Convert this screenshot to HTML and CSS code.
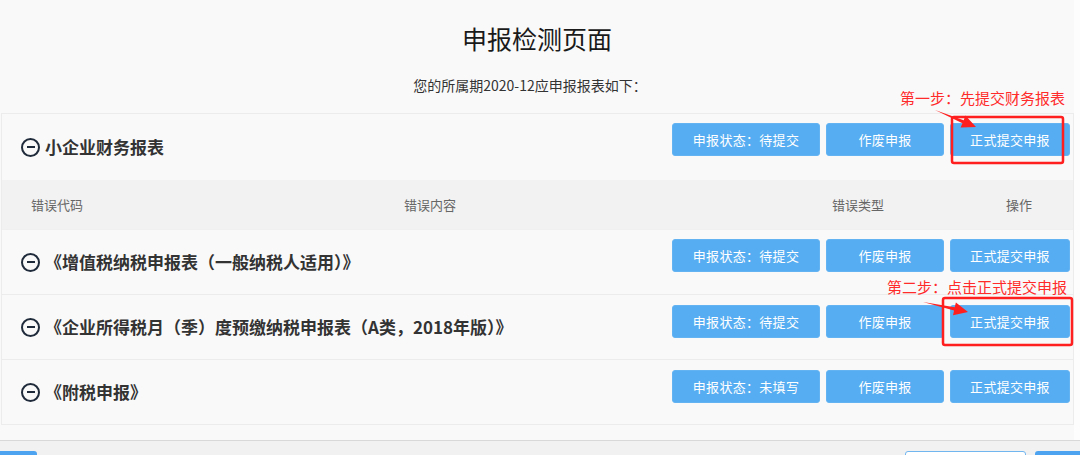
FILE: index.html
```html
<!DOCTYPE html>
<html lang="zh-CN">
<head>
<meta charset="utf-8">
<title>申报检测页面</title>
<link rel="stylesheet" href="styles.css">
</head>
<body>
<div class="page">
  <div class="main">
    <header class="head">
      <h1 class="title">申报检测页面</h1>
      <p class="sub">您的所属期2020-12应申报报表如下：</p>
    </header>
    <div class="panel">
      <div class="row first">
        <div class="name"><span class="ico"></span>小企业财务报表</div>
        <div class="ops">
          <button class="btn b1">申报状态：待提交</button>
          <button class="btn b2">作废申报</button>
          <button class="btn b3">正式提交申报</button>
        </div>
      </div>
      <div class="thead">
        <span>错误代码</span>
        <span>错误内容</span>
        <span>错误类型</span>
        <span>操作</span>
      </div>
      <div class="row">
        <div class="name"><span class="ico"></span>《增值税纳税申报表（一般纳税人适用）》</div>
        <div class="ops">
          <button class="btn b1">申报状态：待提交</button>
          <button class="btn b2">作废申报</button>
          <button class="btn b3">正式提交申报</button>
        </div>
      </div>
      <div class="row">
        <div class="name"><span class="ico"></span>《企业所得税月（季）度预缴纳税申报表（A类，2018年版）》</div>
        <div class="ops low">
          <button class="btn b1">申报状态：待提交</button>
          <button class="btn b2">作废申报</button>
          <button class="btn b3">正式提交申报</button>
        </div>
      </div>
      <div class="row">
        <div class="name"><span class="ico"></span>《附税申报》</div>
        <div class="ops low">
          <button class="btn b1">申报状态：未填写</button>
          <button class="btn b2">作废申报</button>
          <button class="btn b3">正式提交申报</button>
        </div>
      </div>
    </div>
  </div>
  <footer class="foot">
    <span class="fbtn fleft"></span>
    <span class="fspace"></span>
    <span class="fbtn fline"></span>
    <span class="fbtn fblue"></span>
  </footer>

  <span class="note note1">第一步：先提交财务报表</span>
  <span class="note note2">第二步：点击正式提交申报</span>
  <svg class="marks" width="1080" height="455" viewBox="0 0 1080 455">
    <rect x="952" y="117" width="111" height="46" rx="2" fill="none" stroke="#ff1f1f" stroke-width="2.5"/>
    <rect x="943" y="298" width="129" height="47" rx="2" fill="none" stroke="#ff1f1f" stroke-width="2.5"/>
    <polygon fill="#ff1f1f" points="935,110 963.7,120.2 965.4,115.6 976,127 960.6,127.4 962.5,123.2"/>
    <polygon fill="#ff1f1f" points="923,302 954.7,307.2 955.9,302.4 968,312 953,315.2 954.1,310.6"/>
  </svg>
</div>
</body>
</html>
```
FILE: styles.css
```css
* { box-sizing: border-box; }
html, body { margin: 0; padding: 0; }
body {
  width: 1080px;
  height: 455px;
  overflow: hidden;
  background: #f9f9f9;
  font-family: "Noto Sans CJK SC", "Noto Sans", sans-serif;
  color: #333;
}
.page {
  position: relative;
  width: 1080px;
  height: 455px;
  overflow: hidden;
  display: flex;
  flex-direction: column;
}
.main {
  flex: 0 0 auto;
  height: 440px;
  width: 1080px;
  padding-right: 6px;
  background: linear-gradient(to right, #f9f9f9 1074px, #fdfdfd 1074px);
}
.head {
  padding-top: 20px;
  text-align: center;
  width: 1074px;
}
.title {
  margin: 0;
  font-size: 25px;
  line-height: 36px;
  font-weight: 400;
  color: #1a1a1a;
}
.sub {
  margin: 19px 0 18px;
  font-size: 14px;
  line-height: 20px;
  color: #333;
  padding-right: 14px;
}
.panel {
  margin-left: 1px;
  width: 1073px;
  border: 1px solid #ececec;
  border-bottom: 0;
  background: #f9f9f9;
}
.row {
  height: 65px;
  display: flex;
  justify-content: space-between;
  align-items: flex-start;
  padding: 0 3px 0 19px;
  border-bottom: 1px solid #ececec;
}
.row.first {
  height: 66px;
  border-bottom: 0;
}
.name {
  align-self: center;
  display: flex;
  align-items: center;
  gap: 5px;
  font-size: 17px;
  font-weight: 700;
  color: #333;
  line-height: 20px;
}
.ico {
  position: relative;
  width: 19px;
  height: 19px;
  border: 2px solid #1f2a3a;
  border-radius: 50%;
  flex: 0 0 auto;
}
.ico::after {
  content: "";
  position: absolute;
  left: 3.5px;
  top: 6.5px;
  width: 8px;
  height: 2px;
  background: #1f2a3a;
}
.ops {
  display: flex;
  gap: 6px;
  margin-top: 9px;
}
.ops.low { margin-top: 10px; }
.btn {
  height: 33px;
  border: 1px solid #63b3f2;
  border-radius: 3px;
  background: #56adf1;
  color: #fff;
  font-family: "Noto Sans CJK SC", "Noto Sans", sans-serif;
  font-size: 13px;
  padding: 0;
  letter-spacing: 0.3px;
}
.b1 { width: 148px; }
.b2 { width: 118px; }
.b3 { width: 120px; }
.thead {
  height: 50px;
  background: #f2f2f2;
  display: grid;
  grid-template-columns: 373px 428px 174px 1fr;
  align-items: center;
  padding-left: 29px;
  font-size: 13px;
  color: #666;
  border-bottom: 1px solid #f0f0f0;
}
.foot {
  flex: 1 1 auto;
  width: 1095px;
  border-top: 1px solid #d8d8d8;
  background: #f1f1f1;
  display: grid;
  grid-template-columns: 37px 1fr 121px 60px;
  column-gap: 9px;
  padding-top: 10px;
}
.fbtn {
  display: block;
  height: 30px;
  border-radius: 3px;
}
.fleft { background: #4da3ef; border-radius: 0 3px 3px 0; }
.fline { background: #fff; border: 1px solid #72b6f0; }
.fblue { background: #4da3ef; }
.note {
  position: absolute;
  font-size: 15px;
  line-height: 18px;
  color: #ff2b2b;
  white-space: nowrap;
}
.note1 { left: 900px; top: 89px; }
.note2 { left: 887px; top: 278px; }
.marks {
  position: absolute;
  left: 0;
  top: 0;
  pointer-events: none;
}
```
